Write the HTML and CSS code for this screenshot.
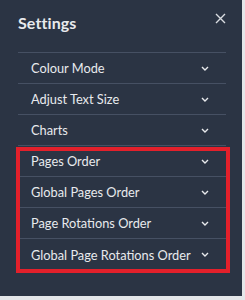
FILE: index.html
```html
<!DOCTYPE html>
<html lang="en">
<head>
    <meta charset="UTF-8">
    <meta name="viewport" content="width=device-width, initial-scale=1.0">
    <title>Settings</title>
    <link rel="stylesheet" href="styles.css">
</head>
<body>

<div class="panel">
    <div class="panel-head">
        <h2 class="title">Settings</h2>
        <svg class="close" width="11" height="11" viewBox="0 0 11 11">
            <path d="M1 1 L10 10 M10 1 L1 10" stroke="#d9dce1" stroke-width="1.4" fill="none"/>
        </svg>
    </div>
    <div class="list">
        <div class="row"><span>Colour Mode</span><svg class="chev" width="8" height="5" viewBox="0 0 8 5"><polyline points="1,1 4,4 7,1" fill="none" stroke="#e8eaed" stroke-width="1.4"/></svg></div>
        <div class="row"><span>Adjust Text Size</span><svg class="chev" width="8" height="5" viewBox="0 0 8 5"><polyline points="1,1 4,4 7,1" fill="none" stroke="#e8eaed" stroke-width="1.4"/></svg></div>
        <div class="row"><span>Charts</span><svg class="chev" width="8" height="5" viewBox="0 0 8 5"><polyline points="1,1 4,4 7,1" fill="none" stroke="#e8eaed" stroke-width="1.4"/></svg></div>
        <div class="group">
            <div class="row"><span>Pages Order</span><svg class="chev" width="8" height="5" viewBox="0 0 8 5"><polyline points="1,1 4,4 7,1" fill="none" stroke="#e8eaed" stroke-width="1.4"/></svg></div>
            <div class="row"><span>Global Pages Order</span><svg class="chev" width="8" height="5" viewBox="0 0 8 5"><polyline points="1,1 4,4 7,1" fill="none" stroke="#e8eaed" stroke-width="1.4"/></svg></div>
            <div class="row"><span>Page Rotations Order</span><svg class="chev" width="8" height="5" viewBox="0 0 8 5"><polyline points="1,1 4,4 7,1" fill="none" stroke="#e8eaed" stroke-width="1.4"/></svg></div>
            <div class="row"><span>Global Page Rotations Order</span><svg class="chev" width="8" height="5" viewBox="0 0 8 5"><polyline points="1,1 4,4 7,1" fill="none" stroke="#e8eaed" stroke-width="1.4"/></svg></div>
        </div>
    </div>
</div>

</body>
</html>
```

FILE: styles.css
```css
body {
    margin: 0;
    font-family: Lato, "Open Sans", sans-serif;
    background-color: #e4e6e9;
    color: #e8eaed;
}
.panel {
    width: 242px;
    height: 296px;
    background: #2b3444;
    padding: 0 16px 0 18px;
    box-sizing: border-box;
}
.panel-head {
    height: 53px;
    display: flex;
    justify-content: space-between;
    align-items: flex-start;
    border-bottom: 1px solid #465063;
    box-sizing: border-box;
}
.title {
    margin: 13px 0 0 0;
    font-size: 16px;
    font-weight: 700;
    letter-spacing: 0.1px;
}
.close {
    margin-top: 13px;
}
.row {
    height: 31px;
    display: flex;
    align-items: center;
    justify-content: space-between;
    padding: 0 17px 0 13px;
    border-bottom: 1px solid #465063;
    box-sizing: border-box;
    font-size: 12.8px;
}
.row:last-child {
    border-bottom: none;
}
.chev {
    flex-shrink: 0;
}
.group {
    position: relative;
}
.group::after {
    content: "";
    position: absolute;
    top: 1px;
    bottom: -3px;
    left: -2px;
    right: -4px;
    border: 4px solid #e3202b;
}
```
